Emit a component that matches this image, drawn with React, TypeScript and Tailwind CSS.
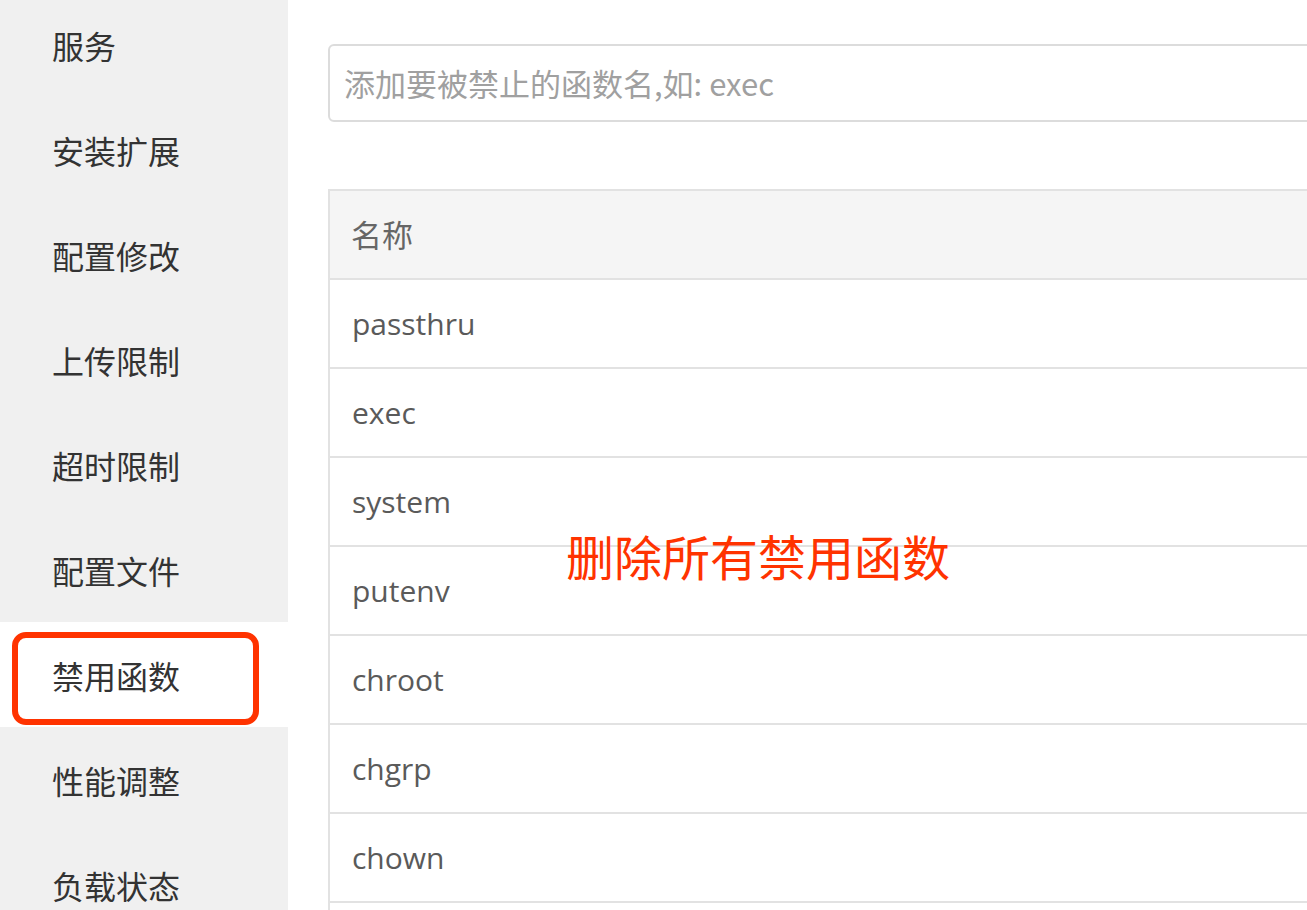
const menu = ['服务', '安装扩展', '配置修改', '上传限制', '超时限制', '配置文件', '禁用函数', '性能调整', '负载状态']
const funcs = ['passthru', 'exec', 'system', 'putenv', 'chroot', 'chgrp', 'chown', '']

const cjk = { fontFamily: '"Noto Sans CJK SC", "Noto Sans", sans-serif' }

export default function App() {
    return (
        <div className="relative w-[1307px] h-[910px] overflow-hidden bg-white flex" style={cjk}>
            {/* Sidebar */}
            <aside className="w-[288px] shrink-0 bg-[#f0f0f0] flex flex-col">
                <div className="-mt-[8px] flex flex-col">
                    {menu.map((m) => {
                        const active = m === '禁用函数'
                        return (
                            <div
                                key={m}
                                className={`relative h-[105px] shrink-0 flex items-center pl-[52px] text-[32px] text-[#333] ${active ? 'bg-white' : ''}`}
                            >
                                {m}
                                {active && (
                                    <div className="absolute left-[12px] top-[10px] w-[247px] h-[93px] border-[6px] border-[#ff3300] rounded-[14px]"></div>
                                )}
                            </div>
                        )
                    })}
                </div>
            </aside>

            {/* Content */}
            <main className="flex-1 pl-[40px] pt-[44px] -mr-[20px]">
                <div className="h-[78px] border-2 border-[#dcdcdc] rounded-[6px] flex items-center pl-[14px] text-[31px] text-[#a0a0a0]">
                    添加要被禁止的函数名,如: exec
                </div>

                <div className="mt-[67px] border-l-2 border-t-2 border-[#e2e2e2]">
                    <div className="h-[89px] bg-[#f5f5f5] border-b-2 border-[#e2e2e2] flex items-center pl-[21px] text-[31px] text-[#666]">
                        名称
                    </div>
                    {funcs.map((f, i) => (
                        <div
                            key={i}
                            className="h-[89px] border-b-2 border-[#e2e2e2] flex items-center pl-[22px] text-[30px] text-[#5a5a5a]"
                            style={{ fontFamily: '"Open Sans", "Noto Sans", sans-serif' }}
                        >
                            {f}
                        </div>
                    ))}
                </div>
            </main>

            {/* Annotation */}
            <div className="absolute left-[566px] top-[531px] text-[48px] leading-none text-[#ff3300]">
                删除所有禁用函数
            </div>
        </div>
    )
}
